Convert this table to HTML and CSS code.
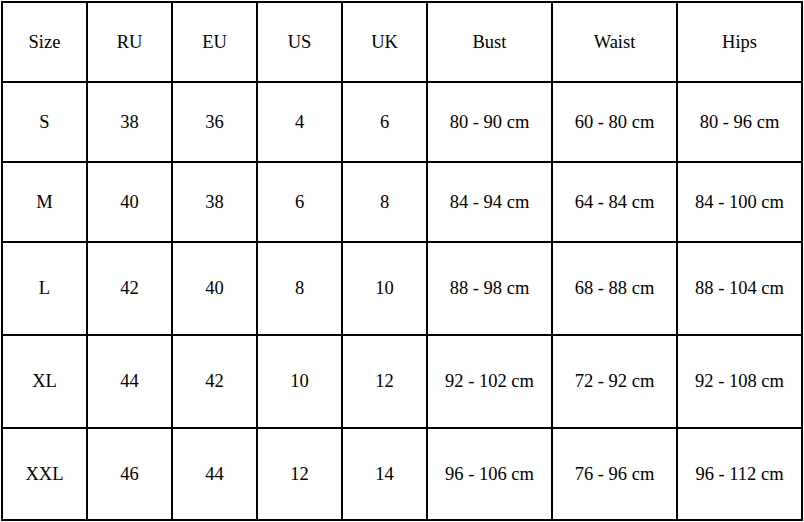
FILE: index.html
```html
<!DOCTYPE html>
<html>
<head>
<meta charset="utf-8">
<link rel="stylesheet" href="styles.css">
</head>
<body>
<div class="chart">
  <div class="cell">Size</div><div class="cell">RU</div><div class="cell">EU</div><div class="cell">US</div><div class="cell">UK</div><div class="cell">Bust</div><div class="cell">Waist</div><div class="cell">Hips</div>
  <div class="cell">S</div><div class="cell">38</div><div class="cell">36</div><div class="cell">4</div><div class="cell">6</div><div class="cell">80 - 90 cm</div><div class="cell">60 - 80 cm</div><div class="cell">80 - 96 cm</div>
  <div class="cell">M</div><div class="cell">40</div><div class="cell">38</div><div class="cell">6</div><div class="cell">8</div><div class="cell">84 - 94 cm</div><div class="cell">64 - 84 cm</div><div class="cell">84 - 100 cm</div>
  <div class="cell">L</div><div class="cell">42</div><div class="cell">40</div><div class="cell">8</div><div class="cell">10</div><div class="cell">88 - 98 cm</div><div class="cell">68 - 88 cm</div><div class="cell">88 - 104 cm</div>
  <div class="cell">XL</div><div class="cell">44</div><div class="cell">42</div><div class="cell">10</div><div class="cell">12</div><div class="cell">92 - 102 cm</div><div class="cell">72 - 92 cm</div><div class="cell">92 - 108 cm</div>
  <div class="cell">XXL</div><div class="cell">46</div><div class="cell">44</div><div class="cell">12</div><div class="cell">14</div><div class="cell">96 - 106 cm</div><div class="cell">76 - 96 cm</div><div class="cell">96 - 112 cm</div>
</div>
</body>
</html>
```

FILE: styles.css
```css
html, body {
  margin: 0;
  padding: 0;
  background: #fff;
}
body {
  padding: 1px;
}
.chart {
  display: grid;
  grid-template-columns: 85px 85px 85px 85px 85px 125px 125px 125px;
  grid-template-rows: 80px 80px 80px 93px 93px 92px;
  width: max-content;
  border-left: 2px solid #000;
  border-top: 2px solid #000;
  font-family: "Liberation Serif", "Times New Roman", serif;
  font-size: 18.5px;
  color: #000;
}
.cell {
  box-sizing: border-box;
  border-right: 2px solid #000;
  border-bottom: 2px solid #000;
  display: flex;
  align-items: center;
  justify-content: center;
  white-space: nowrap;
}
```
